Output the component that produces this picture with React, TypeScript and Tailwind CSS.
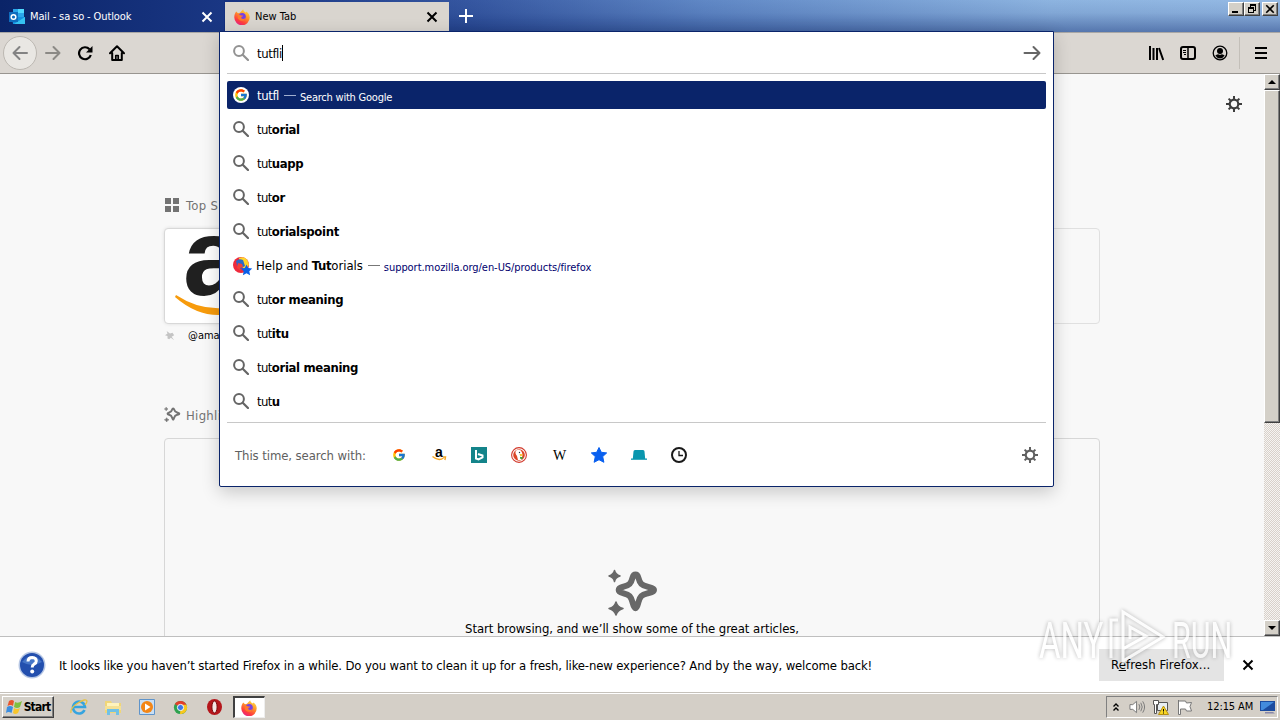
import { ReactNode } from "react";
import { FcGoogle } from "react-icons/fc";

interface Suggestion {
    typed: string;
    rest: string;
}

const suggestions: Suggestion[] = [
    { typed: "tut", rest: "orial" },
    { typed: "tut", rest: "uapp" },
    { typed: "tut", rest: "or" },
    { typed: "tut", rest: "orialspoint" }
];
const moreSuggestions: Suggestion[] = [
    { typed: "tut", rest: "or meaning" },
    { typed: "tut", rest: "itu" },
    { typed: "tut", rest: "orial meaning" },
    { typed: "tut", rest: "u" }
];

function FirefoxIcon() {
    return (
        <svg viewBox="0 0 16 16" className="w-4 h-4 shrink-0">
            <defs>
                <linearGradient id="fox" x1="0.8" y1="0" x2="0.25" y2="1">
                    <stop offset="0" stopColor="#ffe14a" />
                    <stop offset="0.4" stopColor="#ff9628" />
                    <stop offset="0.75" stopColor="#ff3d3d" />
                    <stop offset="1" stopColor="#e3208c" />
                </linearGradient>
            </defs>
            <path d="M2.2 2.4 4 4.2 6 3.8C7 2.5 8 1.2 9.2 0.2c0 1.6 1.5 2.4 2.6 3.4l.6-1.2c2 1.4 3.4 3.8 3.3 6.2A7.7 7.7 0 0 1 .3 8.6C.2 6 1 4 2.2 2.4Z" fill="url(#fox)" />
            <circle cx="8.2" cy="7.6" r="3.6" fill="#7542e5" />
            <path d="M3.8 6.2c1.2-.9 2.6-.5 3.5.2l1.9.2c-.3 1.1-1.5 1.2-2 1.7-.1 1.8 2.2 2.3 4.3.7-.6 2.4-2.7 3.2-4.4 2.7-2.6-.7-4-3-3.3-5.5Z" fill="#ff7a2c" />
        </svg>
    )
}

function SearchIcon({ className }: { className: string }) {
    return (
        <svg viewBox="0 0 16 16" className={`w-4 h-4 shrink-0 ${className}`} fill="none" stroke="currentColor">
            <circle cx="6" cy="6" r="4.9" strokeWidth="2" />
            <path d="m9.700 9.700 5.300 5.300" strokeWidth="2.200" strokeLinecap="round" />
        </svg>
    )
}

function GearIcon() {
    return (
        <svg viewBox="0 0 16 16" className="w-4 h-4 shrink-0" fill="none" stroke="currentColor">
            <circle cx="8" cy="8" r="4.300" strokeWidth="2.200" />
            <path d="M8 0v3.500M8 12.500V16M0 8h3.500M12.500 8H16M2.600 2.600l2.200 2.200M11.200 11.200l2.200 2.200M2.600 13.400l2.200-2.200M11.200 4.800l2.200-2.200" strokeWidth="2" />
        </svg>
    )
}

function SparkleIcon({ className }: { className: string }) {
    return (
        <svg viewBox="0 0 48 48" className={`overflow-visible ${className}`}>
            <path d="M27.500 4.500c1.600 0 2.300 1.100 2.900 3.200 1.700 6.200 3 7.400 9 9 2.300.7 6.600 1 6.600 3.300s-4.300 2.700-6.600 3.300c-6 1.600-7.300 2.900-9 9-.6 2.200-1.300 5.900-2.900 5.900s-2.400-3.700-3-5.900c-1.600-6.100-3-7.400-8.900-9-2.300-.6-4.900-1-4.900-3.300s2.600-2.600 4.900-3.300c5.900-1.600 7.300-2.800 8.900-9 .6-2.100 1.400-3.200 3-3.200Z" fill="none" stroke="currentColor" strokeWidth="6" />
            <path d="M6.500.500q1 4 5.500 5.500-4.500 1-5.500 5.500-1-4.500-5.500-5.500 4.500-1.500 5.500-5.500ZM8 32q1.500 5.200 7 6.500-5.500 1.500-7 6.500-1.500-5-7-6.500 5.500-1.300 7-6.500Z" fill="currentColor" stroke="currentColor" strokeWidth="1.500" strokeLinejoin="round" />
        </svg>
    )
}

function CloseIcon({ className }: { className: string }) {
    return (
        <svg viewBox="0 0 12 12" className={className} fill="none" stroke="currentColor" strokeWidth="2">
            <path d="m1.500 1.500 9 9M10.500 1.500l-9 9" />
        </svg>
    )
}

function BevelButton({ className, children }: { className: string; children: ReactNode }) {
    return (
        <div className={`flex items-center justify-center bg-[#d4d0c8] border border-t-white border-l-white border-r-[#404040] border-b-[#404040] shadow-[inset_-1px_-1px_0_#808080] ${className}`}>
            {children}
        </div>
    )
}

function TabBar() {
    return (
        <div className="h-8 shrink-0 flex bg-[linear-gradient(to_bottom,rgba(10,36,106,0.08),rgba(10,36,106,0.16)_40%,rgba(10,36,106,0.48)),linear-gradient(to_right,#0a246a,#163282_17%,#3a5ca6_37%,#6790cd_55%,#98c0ea_82%,#a0c6ee)]">
            <div className="w-[224px] flex items-center pl-[9px] pr-[11px] pt-0.5 text-white bg-[linear-gradient(to_right,#0a2468,#1a3784)]">
                <svg viewBox="0 0 16 16" className="w-4 h-4">
                    <path d="M4 0h11v8H4z" fill="#2aa5ea" />
                    <path d="M9 0h6v4H9z" fill="#50d9ff" />
                    <path d="M3 8 16 8v7H4z" fill="#1490df" />
                    <path d="m5 15 11-7v7z" fill="#35c2f1" />
                    <path d="M0 3h9v10H0z" fill="#0f6cbd" />
                    <circle cx="4.500" cy="8" r="2.300" fill="none" stroke="white" strokeWidth="1.500" />
                </svg>
                <span className="ml-[5px] pt-px text-[11px] tracking-[-0.12px] grow">Mail - sa so - Outlook</span>
                <CloseIcon className="w-3 h-3" />
            </div>
            <div className="w-[224px] flex items-center pl-[9px] pr-[11px] mt-0.5 mb-px ml-px pt-px bg-[#d9d5cf] mr-2.5">
                <FirefoxIcon />
                <span className="ml-[5px] pt-px text-[11px] grow">New Tab</span>
                <CloseIcon className="w-3 h-3" />
            </div>
            <svg viewBox="0 0 14 14" className="w-3.5 h-3.5 mt-[9px]" stroke="white" strokeWidth="2">
                <path d="M7 0v14M0 7h14" />
            </svg>
            <div className="flex ml-auto mt-0.5 mr-0.5">
                <BevelButton className="w-4 h-[14px]">
                    <svg viewBox="0 0 10 10" className="w-2.5 h-2.5"><path d="M1 7h6v2H1z" /></svg>
                </BevelButton>
                <BevelButton className="w-4 h-[14px] mr-0.5">
                    <svg viewBox="0 0 10 10" className="w-2.5 h-2.5" fill="black" shapeRendering="crispEdges">
                        <path d="M3 0h6v7H7V6h1V2H4v1H3zM1 3h6v6H1zM2 5v3h4V5z" fillRule="evenodd" />
                    </svg>
                </BevelButton>
                <BevelButton className="w-4 h-[14px]">
                    <CloseIcon className="w-2.5 h-2.5" />
                </BevelButton>
            </div>
        </div>
    )
}

function Toolbar() {
    return (
        <div className="h-[42px] shrink-0 flex items-center bg-[#dbd7d2] border-b border-[#989590] border-t border-t-[#a9a7a5]">
            <div className="w-[34px] h-[34px] ml-[3px] rounded-full bg-[#e9e7e3] border border-[#bcb8b2] flex items-center justify-center text-[#838383]">
                <svg viewBox="0 0 16 16" className="w-4 h-4" fill="none" stroke="currentColor" strokeWidth="2" strokeLinecap="round" strokeLinejoin="round">
                    <path d="M15 8H1.500M7.500 2l-6 6 6 6" />
                </svg>
            </div>
            <svg viewBox="0 0 16 16" className="w-4 h-4 ml-2 text-[#8b8985]" fill="none" stroke="currentColor" strokeWidth="2" strokeLinecap="round" strokeLinejoin="round">
                <path d="M1 8h13.500M8.500 2l6 6-6 6" />
            </svg>
            <svg viewBox="0 0 16 16" className="w-4 h-4 ml-4" fill="none" stroke="black" strokeWidth="2.200">
                <path d="M12.500 4.200A6 6 0 1 0 13.800 10" />
                <path d="M15.500 1v6.500H9z" fill="black" stroke="none" />
            </svg>
            <svg viewBox="0 0 16 16" className="w-4 h-4 ml-4" fill="none" stroke="black" strokeWidth="2" strokeLinejoin="round" strokeLinecap="round">
                <path d="M1 8.200 8 1.300l7 6.900M3.200 8v7h9.600V8" />
                <path d="M6.800 14v-3.500h2.400V14" strokeWidth="1.700" />
            </svg>
            <div className="ml-auto flex items-center">
                <svg viewBox="0 0 16 16" className="w-4 h-4" stroke="black" strokeWidth="2">
                    <path d="M2 1v14M5.500 3v12M9 3v12M11 3l4.200 12" />
                </svg>
                <svg viewBox="0 0 16 16" className="w-4 h-4 ml-4" fill="none" stroke="black" strokeWidth="2">
                    <rect x="1" y="2" width="14" height="12" rx="2" />
                    <path d="M8 2v12" strokeWidth="1.500" />
                    <path d="M3 5.500h3M3 7.500h3M4 9.500h2" strokeWidth="1" />
                </svg>
                <svg viewBox="0 0 16 16" className="w-4 h-4 ml-4">
                    <circle cx="8" cy="8" r="6.800" fill="none" stroke="black" strokeWidth="1.300" />
                    <circle cx="8" cy="6" r="3" />
                    <path d="M3.300 10.500q2-1.200 3-1.200 1.700 1 3.400 0 1 0 3 1.200-2 3-4.700 3t-4.700-3Z" />
                </svg>
                <div className="w-px h-8 bg-[#c3bfb9] ml-[11px] mr-[15px]" />
                <svg viewBox="0 0 12 12" className="w-3 h-3 mr-[13px]" stroke="black" strokeWidth="2">
                    <path d="M0 1h12M0 6h12M0 11h12" />
                </svg>
            </div>
        </div>
    )
}

function Scrollbar() {
    return (
        <div className="w-4 shrink-0 flex flex-col bg-[repeating-conic-gradient(#d8d1ca_0_25%,#f6f4f2_0_50%)] bg-[length:2px_2px]">
            <BevelButton className="h-4 shrink-0">
                <svg viewBox="0 0 8 4" className="w-2 h-1"><path d="M0 4 4 0l4 4z" /></svg>
            </BevelButton>
            <BevelButton className="h-[333px] shrink-0">{null}</BevelButton>
            <BevelButton className="h-4 shrink-0 mt-auto">
                <svg viewBox="0 0 8 4" className="w-2 h-1"><path d="m0 0 4 4 4-4z" /></svg>
            </BevelButton>
        </div>
    )
}

function NewTabPage() {
    return (
        <div className="h-[562px] shrink-0 flex bg-[#f8f8f8] overflow-hidden">
            <div className="grow pl-[164px] pr-[22px] flex">
                <div className="w-[936px] shrink-0 flex flex-col pt-[121px]">
                    <div className="h-5 shrink-0 flex items-center text-[#737373]">
                        <svg viewBox="0 0 16 16" className="w-4 h-4 mr-[6px]" fill="currentColor">
                            <path d="M1 1h6v6H1zM9 1h6v6H9zM1 9h6v6H1zM9 9h6v6H9z" />
                        </svg>
                        <span className="text-[13px] tracking-[0.3px] pt-px">Top Sites</span>
                    </div>
                    <div className="h-24 shrink-0 mt-[13px] flex rounded border border-[#e0e0e0]">
                        <div className="w-24 rounded bg-white shadow-[0_0_4px_#ccc] overflow-hidden relative">
                            <span className="absolute left-[18px] -top-[48px] text-[110px] leading-[152px] font-bold text-[#202020] font-['Liberation_Sans',sans-serif]">a</span>
                            <svg viewBox="0 0 90 26" className="absolute left-2.5 top-[66px] w-[90px] h-[26px]">
                                <path d="M1 0q38 25 82 3l2 3Q39 36 0 2Z" fill="#f79b0c" />
                            </svg>
                        </div>
                    </div>
                    <div className="h-[22px] shrink-0 flex items-center pl-px pt-px">
                        <svg viewBox="0 0 12 12" className="w-2.5 h-2.5 text-[#c4c4c4]" fill="currentColor">
                            <path d="m2 0 4 3 3-1 2 3-3 2 3 4-4-3-2 2-2-1 0-3-3-1 3-2z" />
                        </svg>
                        <span className="ml-[13px] pt-px text-[11px]">@amazon</span>
                    </div>
                    <div className="h-5 shrink-0 mt-[59px] flex items-center text-[#737373]">
                        <SparkleIcon className="w-4 h-4 mr-[6px]" />
                        <span className="text-[13px] tracking-[0.3px] pt-px">Highlights</span>
                    </div>
                    <div className="h-[260px] shrink-0 mt-[13px] rounded-sm border border-[#d7d7d7] flex flex-col items-center text-center pt-[131px]">
                        <SparkleIcon className="w-12 h-12 text-[#686868]" />
                        <span className="text-[13px] leading-4 mt-[3px] tracking-[-0.06px]">Start browsing, and we’ll show some of the great articles,</span>
                    </div>
                </div>
                <div className="ml-auto pt-[22px] text-[#3d3d3d]"><GearIcon /></div>
            </div>
            <Scrollbar />
        </div>
    )
}

function SuggestionRow({ typed, rest }: Suggestion) {
    return (
        <div className="h-7 flex items-center pl-1.5">
            <SearchIcon className="text-[#656565]" />
            <span className="ml-2 pt-px text-[13px] tracking-[-0.6px]">{typed}<b className="tracking-[-0.35px]">{rest}</b></span>
        </div>
    )
}

function UrlBarPopup() {
    return (
        <div className="absolute left-[219px] top-[31px] w-[835px] h-[456px] px-[7px] flex flex-col bg-white border border-[#0a246a] rounded-b-xs shadow-[0_5px_18px_rgba(0,0,0,0.2)]">
            <div className="h-[42px] shrink-0 flex items-center pl-1.5 pr-[5px] border-b border-[#c8c8c8]">
                <SearchIcon className="text-[#929292]" />
                <span className="ml-2 pt-0.5 text-[13px] tracking-[-0.4px]">tutfli</span>
                <div className="w-px h-4 bg-black" />
                <svg viewBox="0 0 18 16" className="ml-auto w-[18px] h-4 text-[#666]" fill="none" stroke="currentColor" strokeWidth="2" strokeLinecap="round" strokeLinejoin="round">
                    <path d="M1.500 8h15M10.500 2l6 6-6 6" />
                </svg>
            </div>
            <div className="flex flex-col gap-1.5 pt-[7px] pb-[7px] border-b border-[#c8c8c8]">
                <div className="h-7 flex items-center pl-1.5 rounded-xs bg-[#0a246a] text-white">
                    <div className="w-4 h-4 rounded-full bg-white flex items-center justify-center">
                        <FcGoogle size={14} />
                    </div>
                    <span className="ml-2 pt-px text-[13px] tracking-[-0.4px]">tutfl</span>
                    <div className="w-3 h-px bg-[#a0aed0] ml-[5px] mr-1" />
                    <span className="text-[11px] pt-1.5 tracking-[-0.22px]">Search with Google</span>
                </div>
                {suggestions.map(item => <SuggestionRow key={item.rest} {...item} />)}
                <div className="h-7 flex items-center pl-1.5">
                    <div className="relative w-4 h-4">
                        <svg viewBox="0 0 20 20" className="absolute left-0 top-0 w-5 h-5">
                            <circle cx="8" cy="8" r="8" fill="#ef2a3c" />
                            <path d="M6 1q8-3 10 7l-4 5-5-5Z" fill="#ffd52b" />
                            <path d="M3 4q3-3 7-1l2 6-5 3-3-4Z" fill="#2b69c8" />
                            <path d="m5 6 4 1 1 3-3 1 1 3-4-3Z" fill="#f0413c" />
                            <path d="m13.500 7.500 1.700 3.600 4 .5-2.900 2.700.8 4-3.600-2-3.600 2 .8-4-2.900-2.700 4-.5Z" fill="#0a5fe8" />
                        </svg>
                    </div>
                    <span className="ml-[7px] pt-px text-[13px] tracking-[-0.04px]">Help and <b className="tracking-[-0.3px]">Tut</b>orials</span>
                    <div className="w-3 h-px bg-[#777] ml-[5px] mr-1" />
                    <span className="text-[11px] pt-1.5 tracking-[-0.05px] text-[#00006e]">support.mozilla.org/en-US/products/firefox</span>
                </div>
                {moreSuggestions.map(item => <SuggestionRow key={item.rest} {...item} />)}
            </div>
            <div className="grow flex items-center pl-2 pr-2 text-[#606060]">
                <span className="text-[13px] w-[156px] pt-0.5 tracking-[-0.08px]">This time, search with:</span>
                <div className="flex items-center gap-6">
                    <div className="w-4 flex justify-center"><FcGoogle size={14} /></div>
                    <div className="w-4 h-4 relative text-black">
                        <span className="absolute left-1 -top-[3px] text-[14px] leading-4 font-bold font-['Liberation_Sans',sans-serif]">a</span>
                        <svg viewBox="0 0 16 5" className="absolute left-0 top-[9px] w-4 h-[5px]" fill="none" stroke="#f5a623" strokeWidth="1.400">
                            <path d="M1.500.5q6 5 11 1.500M12 1h2.500l-.6 3" />
                        </svg>
                    </div>
                    <svg viewBox="0 0 16 16" className="w-4 h-4">
                        <path d="M0 0h16v16H0z" fill="#14848a" />
                        <path d="M5 3v8.500l2.500 1L11.500 10.300V8.500L7 7" fill="none" stroke="white" strokeWidth="2" />
                    </svg>
                    <svg viewBox="0 0 16 16" className="w-4 h-4">
                        <circle cx="8" cy="8" r="7.400" fill="white" stroke="#d1382a" strokeWidth="1.100" />
                        <circle cx="8" cy="8" r="5.800" fill="#dc4527" />
                        <path d="M5 3.500q5-2 6 2l.5 2.500-1 5H7L6 9Q3.500 6 5 3.500Z" fill="white" />
                        <path d="m8.500 7 4 .5-3 2z" fill="#f6b91b" />
                        <path d="m9 10 3 0-1 2.500-2-1z" fill="#48a23f" />
                        <circle cx="8.500" cy="5.500" r=".7" fill="#234" />
                    </svg>
                    <span className="w-4 text-center text-[14px] leading-4 tracking-[-1px] pt-0.5 text-black font-['Liberation_Serif',serif]">W</span>
                    <svg viewBox="0 0 16 16" className="w-4 h-4">
                        <path d="m8 .5 2.300 4.800 5.400.6-4 3.700 1.200 5.700L8 12.700l-4.900 2.600 1.200-5.700-4-3.700 5.400-.6Z" fill="#0a60ef" stroke="#0a60ef" strokeLinejoin="round" />
                    </svg>
                    <svg viewBox="0 0 16 16" className="w-4 h-4" fill="#0996ae">
                        <path d="M1.800 12 2.500 4.500q0-1.500 1.500-1.500h8q1.500 0 1.500 1.500l.7 7.500z" />
                        <path d="M0 11.500h16v1.300H0z" />
                    </svg>
                    <svg viewBox="0 0 16 16" className="w-4 h-4" fill="none" stroke="#1a1a1a">
                        <circle cx="8" cy="8" r="7" strokeWidth="2" />
                        <path d="M8 4v4.500h4" strokeWidth="1.300" />
                    </svg>
                </div>
                <div className="ml-auto"><GearIcon /></div>
            </div>
        </div>
    )
}

function NotificationBar() {
    return (
        <div className="h-[57px] shrink-0 flex items-center bg-white border-t border-[#bfbfbf] border-b border-b-[#c5c1ba] pl-[18px] pr-[26px]">
            <svg viewBox="0 0 28 28" className="w-7 h-7 shrink-0">
                <circle cx="14" cy="14" r="13.500" fill="#b7c7e4" />
                <circle cx="14" cy="14" r="12" fill="#234fae" />
                <path d="M4 11q10-12 20 0-10 6-20 0Z" fill="#4676c8" />
                <path d="M10 10.500q.2-4 4.300-4 4 .2 4 3.500 0 2-2.300 3.200-1.800 1-1.800 3.300" fill="none" stroke="white" strokeWidth="3" />
                <circle cx="14.200" cy="20.500" r="2" fill="white" />
            </svg>
            <span className="ml-[13px] pt-0.5 text-[13px] tracking-[-0.142px] whitespace-nowrap">It looks like you haven’t started Firefox in a while. Do you want to clean it up for a fresh, like-new experience? And by the way, welcome back!</span>
            <div className="ml-auto w-[125px] h-8 shrink-0 bg-[#e4e4e4] flex items-center pl-3">
                <span className="text-[13px] tracking-[0.1px]">R<u>e</u>fresh Firefox...</span>
            </div>
            <CloseIcon className="w-3 h-3 ml-[18px]" />
        </div>
    )
}

function Taskbar() {
    return (
        <div className="h-[27px] shrink-0 flex items-center bg-[#d4cfc7] border-t border-white px-0.5 text-[11px]">
            <BevelButton className="w-[52px] h-[22px] gap-0.5">
                <svg viewBox="0 0 16 16" className="w-4 h-4 shrink-0">
                    <path d="M3 2q3-2 5 0L7 7Q5 5 1.500 7Z" fill="#e8542c" />
                    <path d="M9 3q3 2 7-1l-2 6q-3 2-6 0Z" fill="#7fbf3e" />
                    <path d="M1 8q3-2 6 0l-1.500 6q-3-2-5.500 0Z" fill="#3b8ee0" />
                    <path d="M8 9q3 2 6 0l-2 5q-3 2-5 0Z" fill="#f8c62c" />
                </svg>
                <span className="font-bold text-[12px] tracking-[-0.8px]">Start</span>
            </BevelButton>
            <svg viewBox="0 0 18 18" className="w-[18px] h-[18px] ml-4" fill="none">
                <path d="M14.500 12A6 6 0 1 1 15 9H4" stroke="#35a4df" strokeWidth="2.600" />
                <path d="M1 15Q0 10 8 5t9-2q0 2-2 4" stroke="#e6c243" strokeWidth="1.300" />
            </svg>
            <svg viewBox="0 0 18 18" className="w-[18px] h-[18px] ml-4">
                <path d="M1 3h6l1 2h9v10H1z" fill="#f0d678" />
                <path d="M3 5h12v3H3z" fill="#fff3bd" />
                <path d="M1 8h16v4H1z" fill="#f5e195" />
                <path d="M3 17v-6h12v6h-3v-3H6v3z" fill="#71c1e6" />
            </svg>
            <svg viewBox="0 0 18 18" className="w-[18px] h-[18px] ml-4">
                <path d="M1.500 1.500h15v15h-15z" fill="#c9dff4" stroke="#5f94ca" />
                <circle cx="9" cy="9" r="6" fill="#f38616" />
                <path d="M7 5.500v7l5.500-3.500z" fill="white" />
            </svg>
            <svg viewBox="0 0 18 18" className="w-[17px] h-[17px] ml-4">
                <circle cx="9" cy="9" r="7" fill="#2fa24f" />
                <path d="M9 9 3 5.300A7 7 0 0 1 15.200 6Z" fill="#e33e2b" />
                <path d="M9 9h7a7 7 0 0 1-7.500 7z" fill="#f9c81e" />
                <path d="M9 6h6.500q1 3 0 5L9 16l3-7z" fill="#f9c81e" />
                <circle cx="9" cy="9" r="3.300" fill="#3b78e7" stroke="white" />
            </svg>
            <svg viewBox="0 0 18 18" className="w-[18px] h-[18px] ml-4">
                <ellipse cx="9.500" cy="9" rx="7.500" ry="8" fill="#b5161b" />
                <ellipse cx="9.500" cy="9" rx="2.600" ry="6" fill="#f4e7e5" stroke="#770a0c" />
            </svg>
            <div className="w-8 h-[22px] ml-2.5 bg-white border-t-2 border-l-2 border-r border-b border-t-[#404040] border-l-[#404040] border-r-[#eee] border-b-[#eee] flex items-center pl-1.5">
                <FirefoxIcon />
            </div>
            <div className="ml-auto h-[22px] w-[172px] flex items-center border border-t-[#808080] border-l-[#808080] border-b-white border-r-white pl-1.5 pr-px">
                <svg viewBox="0 0 6 8" className="w-1.5 h-2" fill="none" stroke="black" strokeWidth="1.400">
                    <path d="m.5 3.500 2.500-2.500 2.500 2.500M.5 7.500 3 5l2.500 2.500" />
                </svg>
                <svg viewBox="0 0 18 16" className="w-[17px] h-4 ml-2.5" fill="none" stroke="#777">
                    <path d="M1 5.500h3L8 2v12L4 10.500H1z" fill="white" />
                    <path d="M10.500 5q2 3 0 6M12.500 3.500q3 4.500 0 9M14.500 2q4 6 0 12" />
                </svg>
                <svg viewBox="0 0 16 16" className="w-4 h-4 ml-[7px]">
                    <path d="M4.500 3.500h10v8h-10z" fill="#e8eef2" stroke="#555" />
                    <path d="M.5 1.500h5v4h-2v9h-2v-9h-1z" fill="white" stroke="#555" />
                    <path d="m10.500 7 5 8.500h-10z" fill="#f8d622" stroke="#b58f12" />
                    <path d="M10.500 10v2.500M10.500 13.500v1" stroke="black" />
                </svg>
                <svg viewBox="0 0 16 16" className="w-4 h-4 ml-2" fill="white" stroke="#777">
                    <path d="M1.500 1v14.500h2V10h5l1 2h5l-1.500-4.500 1.500-4-5 .5-1-2h-7" />
                </svg>
                <span className="ml-3.5 whitespace-nowrap tracking-[-0.1px]">12:15 AM</span>
                <svg viewBox="0 0 16 14" className="w-4 h-3.5 ml-auto">
                    <path d="M0 1h15v10H0z" fill="#1c4c9f" />
                    <path d="M1 2h13L3 10H1z" fill="#438bdc" />
                    <path d="M5 12h8l2 1.500H5z" fill="#88a" />
                </svg>
            </div>
        </div>
    )
}

function Watermark() {
    return (
        <div className="absolute left-[1037px] top-[608px] w-[200px] h-[60px] opacity-70 text-white drop-shadow-[0_0_2px_rgba(0,0,0,0.4)] font-['Roboto',sans-serif] text-[50px] leading-[60px]">
            <span className="absolute left-0.5 top-[3px] origin-left scale-x-[0.66]">ANY</span>
            <svg viewBox="0 0 60 60" className="absolute left-[72px] top-0 w-[60px] h-[60px]" fill="none" stroke="white" strokeWidth="3">
                <path d="M2 50V12h7M14 56V4l40 25-40 24 0-12 23-13-16-9v12" />
            </svg>
            <span className="absolute left-[135px] top-[3px] origin-left scale-x-[0.61]">RUN</span>
        </div>
    )
}

export default function App() {
    return (
        <div className="relative w-[1280px] h-[720px] overflow-hidden flex flex-col text-black font-['DejaVu_Sans_Condensed','Noto_Sans',sans-serif]">
            <TabBar />
            <Toolbar />
            <NewTabPage />
            <NotificationBar />
            <Taskbar />
            <UrlBarPopup />
            <Watermark />
        </div>
    )
}
